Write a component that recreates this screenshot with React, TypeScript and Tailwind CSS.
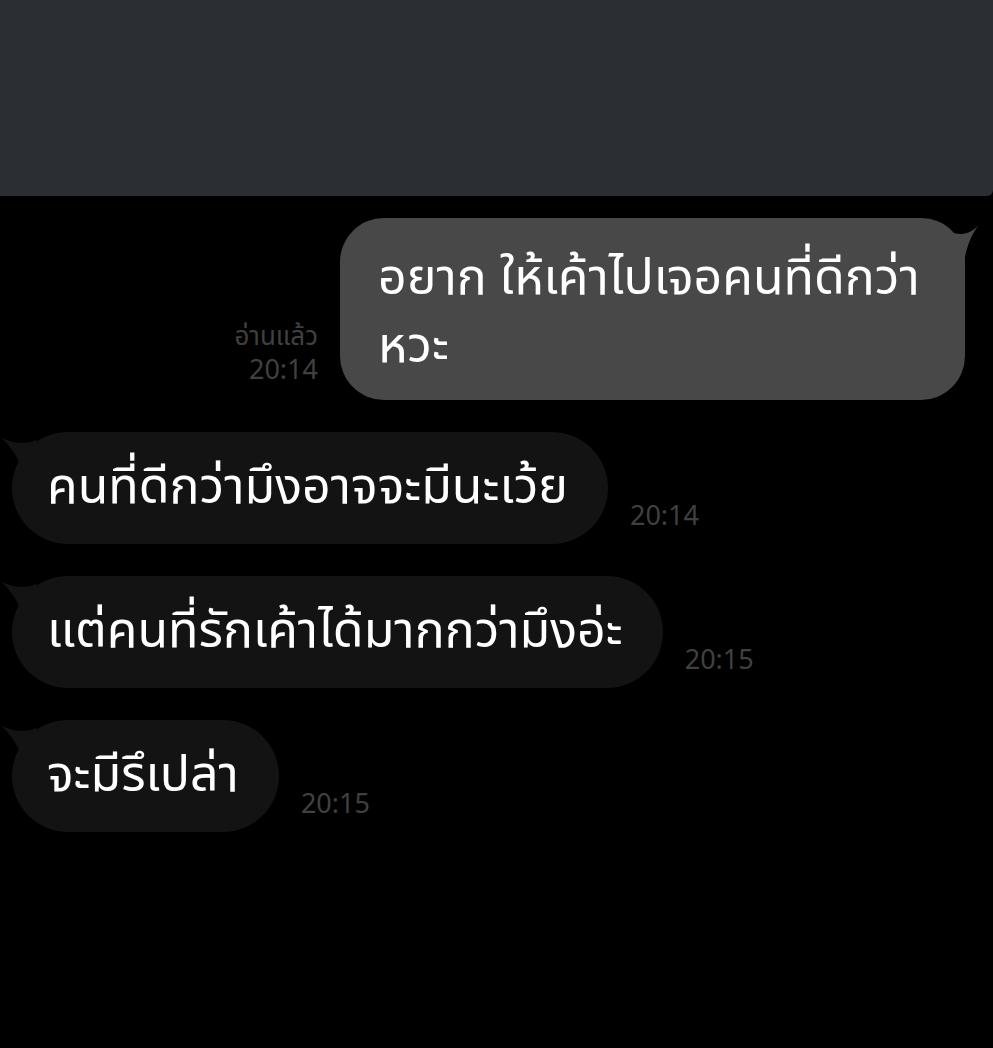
import React from "react";

const font = { fontFamily: '"Noto Sans Thai", "Noto Sans", "DejaVu Sans", sans-serif' };

function LeftTail() {
  return (
    <svg className="absolute -left-[12px] top-0" width="50" height="60" viewBox="0 0 50 60">
      <path d="M0 5 C10 10 22 14 36 8 L50 20 L50 60 L28 60 C26 40 16 18 0 5 Z" fill="#131313" />
    </svg>
  );
}

function RightTail() {
  return (
    <svg className="absolute -right-[15px] top-0" width="40" height="60" viewBox="0 0 40 60">
      <path d="M40 5 C32 16 22 18 10 14 L0 30 L0 60 L22 60 C24 34 30 18 40 5 Z" fill="#484848" />
    </svg>
  );
}

function Incoming({ text, time }: { text: string; time: string }) {
  return (
    <div className="flex items-end">
      <div className="relative ml-[12px] flex h-[112px] items-center rounded-[56px] bg-[#131313] pl-[35px] pr-[40px]">
        <LeftTail />
        <span className="relative text-[50px] leading-none text-white" style={font}>
          {text}
        </span>
      </div>
      <span className="mb-[14px] ml-[22px] text-[27px] leading-none text-[#404040]" style={font}>
        {time}
      </span>
    </div>
  );
}

export default function App() {
  return (
    <div className="flex min-h-[1048px] w-[993px] flex-col bg-black">
      <div className="h-[196px] w-full rounded-br-[6px] bg-[#2b2f33]" />

      <div className="mt-[22px] flex items-end justify-end pr-[28px]">
        <div className="mb-[12px] mr-[22px] flex flex-col items-end text-[26px] leading-[34px] text-[#404040]" style={font}>
          <span>อ่านแล้ว</span>
          <span className="text-[27px]">20:14</span>
        </div>
        <div className="relative w-[625px] rounded-[44px] bg-[#484848] pl-[38px] pr-[20px] pt-[27px] pb-[19px]">
          <RightTail />
          <div className="relative flex flex-col text-[50px] leading-[68px] text-white" style={font}>
            <span>อยาก ให้เค้าไปเจอคนที่ดีกว่า</span>
            <span>หวะ</span>
          </div>
        </div>
      </div>

      <div className="mt-[32px] flex flex-col gap-[32px]">
        <Incoming text="คนที่ดีกว่ามึงอาจจะมีนะเว้ย" time="20:14" />
        <Incoming text="แต่คนที่รักเค้าได้มากกว่ามึงอ่ะ" time="20:15" />
        <Incoming text="จะมีรึเปล่า" time="20:15" />
      </div>
    </div>
  );
}
